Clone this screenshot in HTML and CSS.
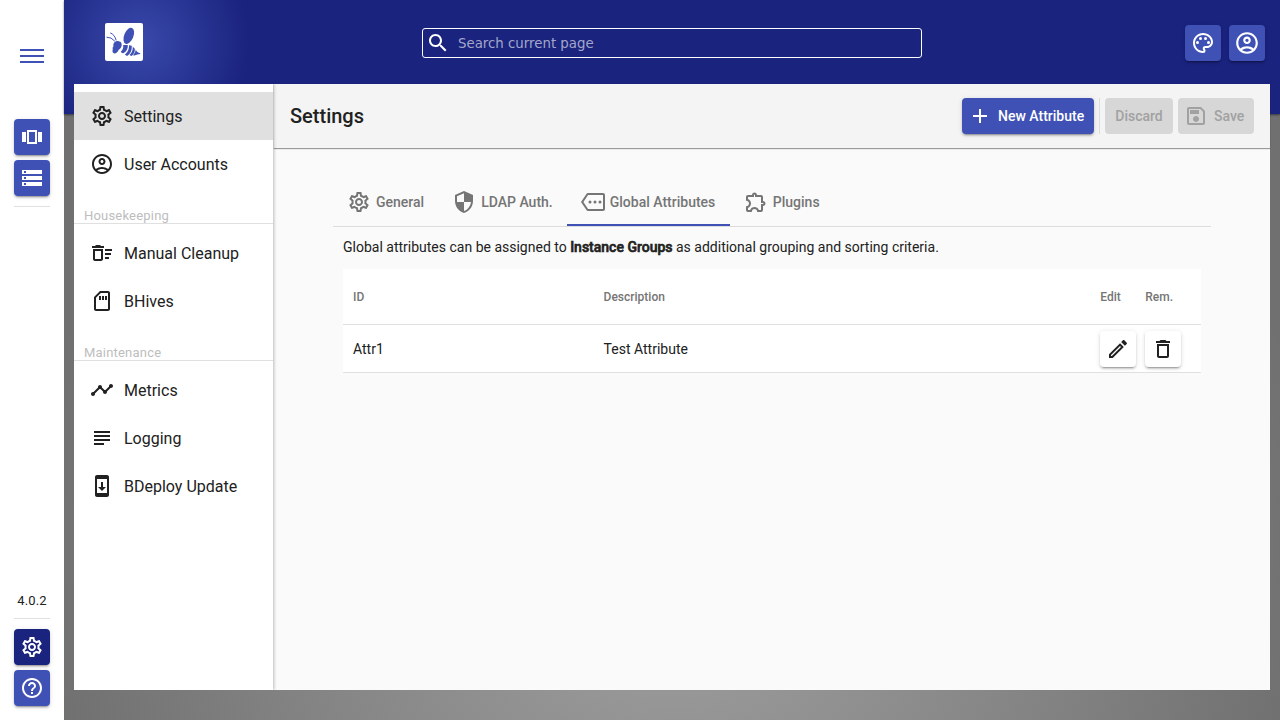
FILE: index.html
```html
<!DOCTYPE html>
<html lang="en">
<head>
<meta charset="utf-8">
<title>BDeploy - Settings</title>
<link rel="stylesheet" href="styles.css">
</head>
<body>
<svg class="sprite" aria-hidden="true">
  <symbol id="settings" viewBox="0 0 24 24"><path d="M19.43 12.98c.04-.32.07-.64.07-.98 0-.34-.03-.66-.07-.98l2.11-1.65c.19-.15.24-.42.12-.64l-2-3.46c-.09-.16-.26-.25-.44-.25-.06 0-.12.01-.17.03l-2.49 1c-.52-.4-1.08-.73-1.69-.98l-.38-2.65C14.46 2.18 14.25 2 14 2h-4c-.25 0-.46.18-.49.42l-.38 2.65c-.61.25-1.17.59-1.69.98l-2.49-1c-.06-.02-.12-.03-.18-.03-.17 0-.34.09-.43.25l-2 3.46c-.13.22-.07.49.12.64l2.11 1.65c-.04.32-.07.65-.07.98 0 .33.03.66.07.98l-2.11 1.65c-.19.15-.24.42-.12.64l2 3.46c.09.16.26.25.44.25.06 0 .12-.01.17-.03l2.49-1c.52.4 1.08.73 1.69.98l.38 2.65c.03.24.24.42.49.42h4c.25 0 .46-.18.49-.42l.38-2.65c.61-.25 1.17-.59 1.69-.98l2.49 1c.06.02.12.03.18.03.17 0 .34-.09.43-.25l2-3.46c.12-.22.07-.49-.12-.64l-2.11-1.65zm-1.98-1.71c.04.31.05.52.05.73 0 .21-.02.43-.05.73l-.14 1.13.89.7 1.08.84-.7 1.21-1.27-.51-1.04-.42-.9.68c-.43.32-.84.56-1.25.73l-1.06.43-.16 1.13-.2 1.35h-1.4l-.19-1.35-.16-1.13-1.06-.43c-.43-.18-.83-.41-1.23-.71l-.91-.7-1.06.43-1.27.51-.7-1.21 1.08-.84.89-.7-.14-1.13c-.03-.31-.05-.54-.05-.74s.02-.43.05-.73l.14-1.13-.89-.7-1.08-.84.7-1.21 1.27.51 1.04.42.9-.68c.43-.32.84-.56 1.25-.73l1.06-.43.16-1.13.2-1.35h1.39l.19 1.35.16 1.13 1.06.43c.43.18.83.41 1.23.71l.91.7 1.06-.43 1.27-.51.7 1.21-1.07.85-.89.7.14 1.13zM12 8c-2.21 0-4 1.79-4 4s1.79 4 4 4 4-1.79 4-4-1.79-4-4-4zm0 6c-1.1 0-2-.9-2-2s.9-2 2-2 2 .9 2 2-.9 2-2 2z"/></symbol>
  <symbol id="account" viewBox="0 0 24 24"><path d="M12 2C6.48 2 2 6.48 2 12s4.48 10 10 10 10-4.48 10-10S17.52 2 12 2zM7.35 18.5C8.66 17.56 10.26 17 12 17s3.34.56 4.65 1.5C15.34 19.44 13.74 20 12 20s-3.34-.56-4.65-1.5zm10.79-1.38C16.45 15.8 14.32 15 12 15s-4.45.8-6.14 2.12C4.7 15.73 4 13.95 4 12c0-4.42 3.58-8 8-8s8 3.58 8 8c0 1.95-.7 3.73-1.86 5.12zM12 6c-1.93 0-3.5 1.57-3.5 3.5S10.07 13 12 13s3.5-1.57 3.5-3.5S13.93 6 12 6zm0 5c-.83 0-1.5-.67-1.5-1.5S11.17 8 12 8s1.5.67 1.5 1.5S12.83 11 12 11z"/></symbol>
  <symbol id="menu" viewBox="0 0 24 24"><path d="M0 5h24v2H0zM0 11h24v2H0zM0 17h24v2H0z"/></symbol>
  <symbol id="carousel" viewBox="0 0 24 24"><path d="M2 7h4v10H2V7zm5 12h10V5H7v14zM9 7h6v10H9V7zm9 0h4v10h-4V7z"/></symbol>
  <symbol id="storage" viewBox="0 0 24 24"><path d="M2 20h20v-4H2v4zm2-3h2v2H4v-2zM2 4v4h20V4H2zm4 3H4V5h2v2zm-4 7h20v-4H2v4zm2-3h2v2H4v-2z"/></symbol>
  <symbol id="help" viewBox="0 0 24 24"><path d="M11 18h2v-2h-2v2zm1-16C6.48 2 2 6.48 2 12s4.48 10 10 10 10-4.48 10-10S17.52 2 12 2zm0 18c-4.41 0-8-3.59-8-8s3.59-8 8-8 8 3.59 8 8-3.59 8-8 8zm0-14c-2.21 0-4 1.79-4 4h2c0-1.1.9-2 2-2s2 .9 2 2c0 2-3 1.75-3 5h2c0-2.25 3-2.5 3-5 0-2.21-1.79-4-4-4z"/></symbol>
  <symbol id="palette" viewBox="0 0 24 24"><path d="M12 22C6.49 22 2 17.51 2 12S6.49 2 12 2s10 4.04 10 9c0 3.31-2.69 6-6 6h-1.77c-.28 0-.5.22-.5.5 0 .12.05.23.13.33.41.47.64 1.06.64 1.67A2.5 2.5 0 0 1 12 22zm0-18c-4.41 0-8 3.59-8 8s3.59 8 8 8c.28 0 .5-.22.5-.5a.54.54 0 0 0-.14-.35c-.41-.46-.63-1.05-.63-1.65a2.5 2.5 0 0 1 2.5-2.5H16c2.21 0 4-1.79 4-4 0-3.86-3.59-7-8-7z"/><circle cx="6.5" cy="11.5" r="1.5"/><circle cx="9.5" cy="7.5" r="1.5"/><circle cx="14.5" cy="7.5" r="1.5"/><circle cx="17.5" cy="11.5" r="1.5"/></symbol>
  <symbol id="search" viewBox="0 0 24 24"><path d="M15.5 14h-.79l-.28-.27C15.41 12.59 16 11.11 16 9.5 16 5.91 13.09 3 9.5 3S3 5.91 3 9.5 5.91 16 9.5 16c1.61 0 3.09-.59 4.23-1.57l.27.28v.79l5 4.99L20.49 19l-4.99-5zm-6 0C7.01 14 5 11.99 5 9.5S7.01 5 9.5 5 14 7.01 14 9.5 11.99 14 9.5 14z"/></symbol>
  <symbol id="sweep" viewBox="0 0 24 24"><path d="M15 16h4v2h-4zm0-8h7v2h-7zm0 4h6v2h-6zM3 18c0 1.1.9 2 2 2h6c1.1 0 2-.9 2-2V8H3v10zm2-8h6v8H5v-8zm5-6H6L5 5H2v2h12V5h-3z"/></symbol>
  <symbol id="sd" viewBox="0 0 24 24"><path d="M18 2h-8L4 8v12c0 1.1.9 2 2 2h12c1.1 0 2-.9 2-2V4c0-1.1-.9-2-2-2zm0 2v16H6V8.83L10.83 4H18zM9 7h2v4H9zm3 0h2v4h-2zm3 0h2v4h-2z"/></symbol>
  <symbol id="timeline" viewBox="0 0 24 24"><path d="M23 8c0 1.1-.9 2-2 2-.18 0-.35-.02-.51-.07l-3.56 3.55c.05.16.07.34.07.52 0 1.1-.9 2-2 2s-2-.9-2-2c0-.18.02-.36.07-.52l-2.55-2.55c-.16.05-.34.07-.52.07s-.36-.02-.52-.07l-4.55 4.56c.05.16.07.33.07.51 0 1.1-.9 2-2 2s-2-.9-2-2 .9-2 2-2c.18 0 .35.02.51.07l4.56-4.55C8.02 9.36 8 9.18 8 9c0-1.1.9-2 2-2s2 .9 2 2c0 .18-.02.36-.07.52l2.55 2.55c.16-.05.34-.07.52-.07s.36.02.52.07l3.55-3.56C19.02 8.35 19 8.18 19 8c0-1.1.9-2 2-2s2 .9 2 2z"/></symbol>
  <symbol id="notes" viewBox="0 0 24 24"><path d="M14 17H4v2h10v-2zm6-8H4v2h16V9zM4 15h16v-2H4v2zM4 5v2h16V5H4z"/></symbol>
  <symbol id="update" viewBox="0 0 24 24"><path d="M17 1.01L7 1c-1.1 0-2 .9-2 2v18c0 1.1.9 2 2 2h10c1.1 0 2-.9 2-2V3c0-1.1-.9-1.99-2-1.99zM17 19H7V5h10v14zm-1-6h-3V8h-2v5H8l4 4 4-4z"/></symbol>
  <symbol id="add" viewBox="0 0 24 24"><path d="M19 13h-6v6h-2v-6H5v-2h6V5h2v6h6v2z"/></symbol>
  <symbol id="save" viewBox="0 0 24 24"><path d="M17 3H5c-1.11 0-2 .9-2 2v14c0 1.1.89 2 2 2h14c1.1 0 2-.9 2-2V7l-4-4zm2 16H5V5h11.17L19 7.83V19zm-7-7c-1.66 0-3 1.34-3 3s1.34 3 3 3 3-1.34 3-3-1.34-3-3-3zM6 6h9v4H6z"/></symbol>
  <symbol id="security" viewBox="0 0 24 24"><path d="M12 1L3 5v6c0 5.55 3.84 10.74 9 12 5.16-1.26 9-6.45 9-12V5l-9-4zm0 10.99h7c-.53 4.12-3.28 7.79-7 8.94V12H5V6.3l7-3.11v8.8z"/></symbol>
  <symbol id="more" viewBox="0 0 24 24"><path d="M22 3H7c-.69 0-1.23.35-1.59.88L0 12l5.41 8.11c.36.53.97.89 1.66.89H22c1.1 0 2-.9 2-2V5c0-1.1-.9-2-2-2zm0 16H7.07L2.4 12l4.66-7H22v14z"/><circle cx="9" cy="12" r="1.5"/><circle cx="14" cy="12" r="1.5"/><circle cx="19" cy="12" r="1.5"/></symbol>
  <symbol id="extension" viewBox="0 0 24 24"><path d="M10.5 4.5c.28 0 .5.22.5.5v2h6v6h2c.28 0 .5.22.5.5s-.22.5-.5.5h-2v6h-2.12c-.68-1.75-2.39-3-4.38-3s-3.7 1.25-4.38 3H4v-2.12c1.75-.68 3-2.39 3-4.38 0-1.99-1.24-3.7-2.99-4.38L4 7h6V5c0-.28.22-.5.5-.5m0-2C9.12 2.5 8 3.62 8 5H4c-1.1 0-1.99.9-1.99 2v3.8h.29c1.49 0 2.7 1.21 2.7 2.7s-1.21 2.7-2.7 2.7H2V20c0 1.1.9 2 2 2h3.8v-.3c0-1.49 1.21-2.7 2.7-2.7s2.7 1.21 2.7 2.7v.3H17c1.1 0 2-.9 2-2v-4c1.38 0 2.5-1.12 2.5-2.5S20.38 11 19 11V7c0-1.1-.9-2-2-2h-4c0-1.38-1.12-2.5-2.5-2.5z"/></symbol>
  <symbol id="edit" viewBox="0 0 24 24"><path d="M14.06 9.02l.92.92L5.92 19H5v-.92l9.06-9.06M17.66 3c-.25 0-.51.1-.7.29l-1.83 1.83 3.75 3.75 1.83-1.83c.39-.39.39-1.02 0-1.41l-2.34-2.34c-.2-.2-.45-.29-.71-.29zm-3.6 3.19L3 17.25V21h3.75L17.81 9.94l-3.75-3.75z"/></symbol>
  <symbol id="delete" viewBox="0 0 24 24"><path d="M16 9v10H8V9h8m-1.5-6h-5l-1 1H5v2h14V4h-3.5l-1-1zM18 7H6v12c0 1.1.9 2 2 2h8c1.1 0 2-.9 2-2V7z"/></symbol>
  <symbol id="bee" viewBox="0 0 38 38"><ellipse cx="23.8" cy="12.8" rx="4.6" ry="8.5" transform="rotate(22 23.8 12.8)"/><path d="M9.500 19.200c1.200-1.200 3.200-1.500 4.700-.8 1.700.1 2.600 1.600 2.500 3.500-.1 2.200-1.300 3.800-3 4.900-.8 2.100-2.400 3.800-4.100 3.700-2-.2-2.600-2.200-1.800-4.300-.4-1.200 0-2.200.8-2.900-.6-1.400-.2-3 .9-4.100z"/><path d="M18.200 22l4.600.1c.3 3.900-1.400 6.800-4.700 8.200-1.300-.1-1.900-.7-2.200-1.700 1.900-1.600 2.700-3.700 2.300-6.600zM24 22.200l2.800.6c.2 4.500-1 7.700-4.200 10-1.300.1-2.200-.5-2.500-1.500 2.900-2.400 4.100-5.300 3.900-9.100zM27.800 23.700l2 2c.3 3.100-.8 5.400-3.200 7.300-.9 0-1.600-.5-1.900-1.200 2.200-2.200 3.200-4.700 3.100-8.100zM30.700 26.700c.9 1.700 2.300 2.900 4.500 3.500v.7c-1.900.1-4 .9-5.700 1.600-.6.200-1.100-.1-1.300-.6 1.500-1.500 2.300-3.100 2.500-5.200z"/><path class="antenna" d="M1.500 14.200q5-.2 8.300 4M5.200 9.900q4.500 1.600 6 7.500"/></symbol>
</svg>
<div class="app">
  <aside class="rail">
    <svg class="icon menu"><use href="#menu"/></svg>
    <div class="rail-group rail-top">
      <button class="btn square"><svg class="icon"><use href="#carousel"/></svg></button>
      <button class="btn square"><svg class="icon"><use href="#storage"/></svg></button>
    </div>
    <span class="version">4.0.2</span>
    <div class="rail-group rail-bottom">
      <button class="btn square active"><svg class="icon"><use href="#settings"/></svg></button>
      <button class="btn square"><svg class="icon"><use href="#help"/></svg></button>
    </div>
  </aside>
  <div class="stage">
    <div class="banner"></div>
    <header class="header">
      <div class="logo"><svg><use href="#bee"/></svg></div>
      <label class="search"><svg class="icon"><use href="#search"/></svg><span>Search current page</span></label>
      <div class="header-actions">
        <button class="btn square"><svg class="icon"><use href="#palette"/></svg></button>
        <button class="btn square"><svg class="icon large"><use href="#account"/></svg></button>
      </div>
    </header>
    <div class="panel">
      <nav class="nav">
        <a class="nav-item selected"><svg class="icon"><use href="#settings"/></svg>Settings</a>
        <a class="nav-item"><svg class="icon"><use href="#account"/></svg>User Accounts</a>
        <h3 class="nav-title">Housekeeping</h3>
        <a class="nav-item"><svg class="icon"><use href="#sweep"/></svg>Manual Cleanup</a>
        <a class="nav-item"><svg class="icon"><use href="#sd"/></svg>BHives</a>
        <h3 class="nav-title">Maintenance</h3>
        <a class="nav-item"><svg class="icon"><use href="#timeline"/></svg>Metrics</a>
        <a class="nav-item"><svg class="icon"><use href="#notes"/></svg>Logging</a>
        <a class="nav-item"><svg class="icon"><use href="#update"/></svg>BDeploy Update</a>
      </nav>
      <main class="main">
        <div class="toolbar">
          <h1>Settings</h1>
          <button class="btn new"><svg class="icon"><use href="#add"/></svg>New Attribute</button>
          <i class="divider"></i>
          <button class="btn disabled discard">Discard</button>
          <button class="btn disabled save"><svg class="icon"><use href="#save"/></svg>Save</button>
        </div>
        <div class="content">
          <div class="tabs">
            <div class="tab"><svg class="icon"><use href="#settings"/></svg>General</div>
            <div class="tab"><svg class="icon"><use href="#security"/></svg>LDAP Auth.</div>
            <div class="tab current"><svg class="icon"><use href="#more"/></svg>Global Attributes</div>
            <div class="tab"><svg class="icon"><use href="#extension"/></svg>Plugins</div>
          </div>
          <p class="hint">Global attributes can be assigned to <strong>Instance Groups</strong> as additional grouping and sorting criteria.</p>
          <div class="table">
            <div class="row head"><span>ID</span><span>Description</span><span>Edit</span><span>Rem.</span></div>
            <div class="row"><span>Attr1</span><span>Test Attribute</span><button class="btn square plain"><svg class="icon"><use href="#edit"/></svg></button><button class="btn square plain"><svg class="icon"><use href="#delete"/></svg></button></div>
          </div>
        </div>
      </main>
    </div>
  </div>
</div>
</body>
</html>
```
FILE: styles.css
```css
* { box-sizing: border-box; }
body { margin: 0; font-family: Roboto, "Liberation Sans", sans-serif; color: #212121; }
.sprite { display: none; }
.app { display: flex; width: 1280px; height: 720px; overflow: hidden; }
.icon { width: 24px; height: 24px; fill: currentColor; flex: none; }
.icon.large { width: 26px; height: 26px; }

.btn {
  display: flex; align-items: center; height: 36px; border: 0; border-radius: 4px; padding: 0;
  background: #3f51b5; color: #fff; font: 500 14px Roboto, sans-serif; white-space: nowrap;
  box-shadow: 0 3px 1px -2px rgba(0,0,0,.2), 0 2px 2px rgba(0,0,0,.14), 0 1px 5px rgba(0,0,0,.12);
}
.square { width: 36px; justify-content: center; }
.active { background: #1a237e; }
.plain { background: #fff; color: #212121; }
.disabled { background: #d7d7d7; color: #a1a1a1; box-shadow: none; }

.rail { width: 64px; flex: none; background: #fff; display: flex; flex-direction: column; align-items: center; padding: 44px 0 14px; }
.menu { color: #3f51b5; margin-bottom: 51px; }
.rail-group { display: flex; flex-direction: column; gap: 5px; width: 36px; }
.rail-top { padding-bottom: 10px; border-bottom: 1px solid #e0e0e0; }
.version { margin-top: auto; font-size: 13px; line-height: 15px; letter-spacing: .1px; margin-bottom: 10px; }
.rail-bottom { padding-top: 10px; border-top: 1px solid #e0e0e0; }

.stage {
  position: relative; flex: 1; display: flex; flex-direction: column; padding: 0 10px 30px;
  background: radial-gradient(circle at 50% 75%, #a3a3a3 0, #707070 640px);
}
.banner {
  position: absolute; top: 0; left: 0; right: 0; height: 114px;
  background: radial-gradient(circle at 76px 42px, #3949ab 0, #1a237e 110px);
  box-shadow: 0 1px 2px rgba(0,0,0,.5);
}
.header { position: relative; height: 84px; flex: none; display: flex; align-items: center; padding: 0 5px 0 31px; }
.logo { width: 38px; height: 38px; background: #fff; border-radius: 2px; }
.logo svg { display: block; width: 38px; height: 38px; fill: #3f51b5; }
.antenna { fill: none; stroke: #3f51b5; stroke-width: 1; }
.search { display: flex; align-items: center; width: 500px; height: 30px; margin: 2px 0 0 279px; padding-left: 3px; gap: 8px; border: 1px solid #fff; border-radius: 3px; color: #fff; font: 13.333px "DejaVu Sans", sans-serif; }
.search span { color: #a3a7cb; }
.header-actions { display: flex; gap: 8px; margin: 2px 0 0 auto; }

.panel { position: relative; flex: 1; display: flex; background: #fafafa; }
.nav { position: relative; z-index: 1; width: 199px; background: #fff; padding-top: 8px; box-shadow: 1px 0 3px rgba(0,0,0,.25); clip-path: inset(0 -6px 0 0); }
.nav-item { display: flex; align-items: center; gap: 10px; height: 48px; padding-left: 16px; font-size: 16px; }
.selected { background: #e0e0e0; }
.nav-title { margin: 20px 0 5px; height: 16px; padding-left: 10px; border-bottom: 1px solid #e0e0e0; font-weight: 400; font-size: 13px; line-height: 16px; letter-spacing: .2px; color: #bdbdbd; }
.main { flex: 1; display: flex; flex-direction: column; margin-left: 1px; }
.toolbar { display: flex; align-items: center; height: 64px; padding: 0 16px; background: #f4f4f4; box-shadow: 0 1px 1px rgba(0,0,0,.38); }
.toolbar h1 { flex: 1; margin: 0; font-size: 20px; font-weight: 500; }
.new { width: 132px; padding-left: 6px; gap: 6px; }
.divider { width: 1px; height: 36px; background: #dcdcdc; margin: 0 5px; }
.discard { width: 68px; justify-content: center; }
.save { width: 76px; margin-left: 5px; padding-left: 6px; gap: 6px; }
.content { padding: 30px 59px 0; }
.tabs { display: flex; height: 49px; border-bottom: 1px solid #dcdcdc; color: #757575; font-size: 14px; font-weight: 500; }
.tab { display: flex; align-items: center; gap: 5px; height: 48px; padding: 0 14px; }
.tab.current { border-bottom: 2px solid #3f51b5; padding: 2px 14.5px 0 14px; }
.hint { margin: 10px 0 11px 10px; font-size: 14px; line-height: 21px; }
.hint strong { font-weight: 500; -webkit-text-stroke: .6px currentColor; }
.table { margin: 0 10px; background: #fff; }
.row { display: grid; grid-template-columns: 250.6px 496.7px 45px 1fr; align-items: center; height: 48px; padding-left: 10px; border-bottom: 1px solid #e0e0e0; font-size: 14px; }
.head { height: 56px; font-size: 12px; font-weight: 500; color: #757575; }
```
